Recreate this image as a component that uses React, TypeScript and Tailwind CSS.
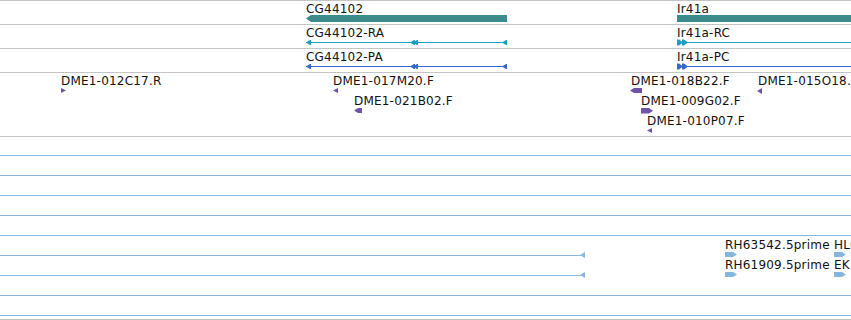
import React from "react";

type P = { top: number; h: string; hp: number; children?: React.ReactNode };

function Track({ top, h, hp, children }: P) {
  return (
    <div className={`relative shrink-0 ${h}`}>
      <svg
        className="absolute left-0 top-0 font-['DejaVu_Sans',sans-serif] text-[12px] tracking-[0.2px]"
        width={851}
        height={hp}
      >
        <g transform={`translate(0,${-top})`}>{children}</g>
      </svg>
    </div>
  );
}

function Sep() {
  return <div className="h-px shrink-0 bg-[#c4c4c4]" />;
}

function L(x0: number, x1: number, y0: number, y1: number, tip: number, fill: string) {
  const m = (y0 + y1) / 2;
  return (
    <polygon
      key={`l${x0}-${y0}`}
      fill={fill}
      points={`${x0},${m} ${x0 + tip},${y0} ${x1},${y0} ${x1},${y1} ${x0 + tip},${y1}`}
    />
  );
}

function R(x0: number, x1: number, y0: number, y1: number, tip: number, fill: string) {
  const m = (y0 + y1) / 2;
  return (
    <polygon
      key={`r${x0}-${y0}`}
      fill={fill}
      points={`${x0},${y0} ${x1 - tip},${y0} ${x1},${m} ${x1 - tip},${y1} ${x0},${y1}`}
    />
  );
}

function T({ x, y, s }: { x: number; y: number; s: string }) {
  return (
    <text x={x} y={y} fill="#111">
      {s}
    </text>
  );
}

const TEAL = "#3b8b8b";
const CYAN = "#199fc2";
const BLUE = "#3567cc";
const PURPLE = "#6e54a6";
const EST = "#86b6dc";

export default function App() {
  const estFull = [155, 175, 195, 215, 235, 295, 315];
  return (
    <div className="flex h-[320px] w-[851px] flex-col overflow-hidden bg-white">
      <Sep />
      <Track top={1} h="h-[23px]" hp={23}>
        <T x={306} y={13} s="CG44102" />
        {L(306, 507, 15, 22, 5, TEAL)}
        <T x={677} y={13} s="Ir41a" />
        <rect x={677} y={15} width={180} height={7} fill={TEAL} />
      </Track>
      <Sep />
      <Track top={25} h="h-[23px]" hp={23}>
        <T x={306} y={37} s="CG44102-RA" />
        <rect x={306} y={42} width={201} height={1} fill={CYAN} />
        {L(306, 311, 40, 45, 4, CYAN)}
        {L(410, 415, 40, 45, 4, CYAN)}
        {L(413, 418, 40, 45, 4, CYAN)}
        {L(502, 507, 40, 45, 4, CYAN)}
        <T x={677} y={37} s="Ir41a-RC" />
        <rect x={677} y={42} width={180} height={1} fill={CYAN} />
        {R(677, 683, 39.5, 45.5, 4, CYAN)}
        {R(682, 688, 39.5, 45.5, 4, CYAN)}
      </Track>
      <Sep />
      <Track top={49} h="h-[23px]" hp={23}>
        <T x={306} y={61} s="CG44102-PA" />
        <rect x={306} y={66} width={201} height={1} fill={BLUE} />
        {L(306, 311, 64, 69, 4, BLUE)}
        {L(410, 415, 64, 69, 4, BLUE)}
        {L(413, 418, 64, 69, 4, BLUE)}
        {L(502, 507, 64, 69, 4, BLUE)}
        <T x={677} y={61} s="Ir41a-PC" />
        <rect x={677} y={66} width={180} height={1} fill={BLUE} />
        {R(677, 683, 63.5, 69.5, 4, BLUE)}
        {R(682, 688, 63.5, 69.5, 4, BLUE)}
      </Track>
      <Sep />
      <Track top={73} h="h-[63px]" hp={63}>
        <T x={61} y={85} s="DME1-012C17.R" />
        {R(61, 66, 88, 93, 5, PURPLE)}
        <T x={333} y={85} s="DME1-017M20.F" />
        {L(333, 338, 88, 93, 5, PURPLE)}
        <T x={354} y={105} s="DME1-021B02.F" />
        {L(354, 362, 108, 113, 4, PURPLE)}
        <T x={631} y={85} s="DME1-018B22.F" />
        {L(630, 642, 88, 93, 4, PURPLE)}
        <T x={758} y={85} s="DME1-015O18.F" />
        {L(757, 762, 88, 94, 5, PURPLE)}
        <T x={641} y={105} s="DME1-009G02.F" />
        {R(641, 653, 108, 113.5, 4, PURPLE)}
        <T x={647} y={125} s="DME1-010P07.F" />
        {L(647, 652, 128, 133, 5, PURPLE)}
      </Track>
      <Sep />
      <Track top={137} h="h-[182px]" hp={182}>
        {estFull.map((y) => (
          <rect key={y} x={0} y={y} width={851} height={1} fill={EST} />
        ))}
        {[255, 275].map((y) => (
          <g key={y}>
            <rect x={0} y={y} width={581} height={1} fill={EST} />
            {L(580, 585, y - 3, y + 3, 5, EST)}
          </g>
        ))}
        <T x={725} y={249} s="RH63542.5prime" />
        {R(725, 737, 252, 257, 4, EST)}
        <T x={834} y={249} s="HL01234" />
        {R(834, 846, 252, 257, 4, EST)}
        <T x={725} y={269} s="RH61909.5prime" />
        {R(725, 737, 272, 277, 4, EST)}
        <T x={834} y={269} s="EK123456" />
        {R(834, 846, 272, 277, 4, EST)}
      </Track>
      <Sep />
    </div>
  );
}
